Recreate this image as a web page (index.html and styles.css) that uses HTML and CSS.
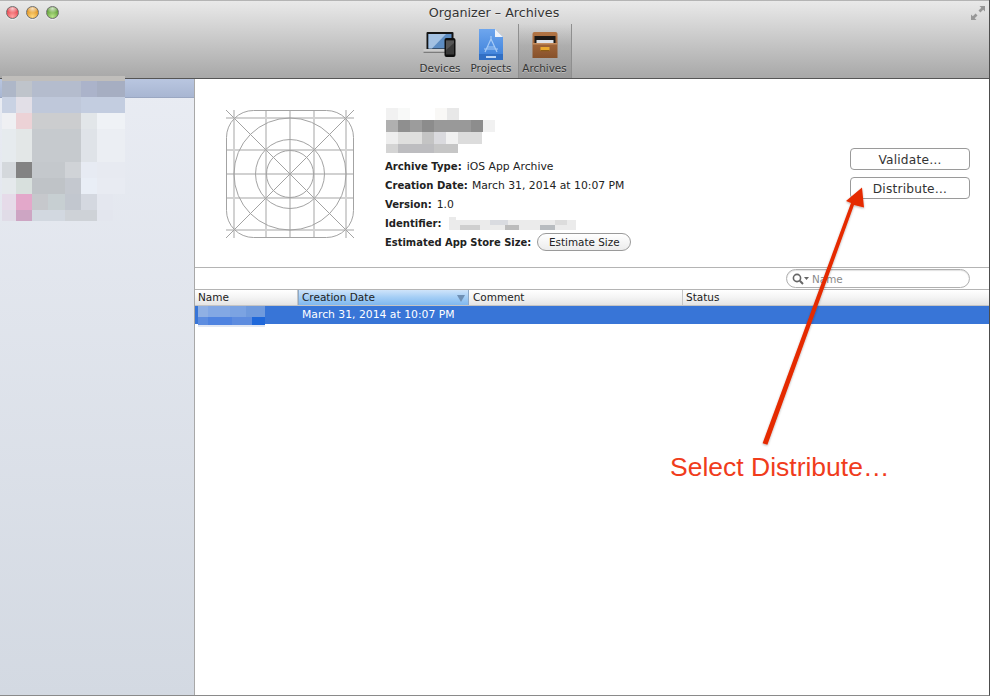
FILE: index.html
```html
<!DOCTYPE html>
<html lang="en">
<head>
<meta charset="utf-8">
<title>Organizer - Archives</title>
<link rel="stylesheet" href="styles.css">
</head>
<body>
<div class="window">
  <header class="titlebar">
    <div class="title-row">
      <div class="lights"><span class="light red"></span><span class="light amber"></span><span class="light green"></span></div>
      <div class="title">Organizer – Archives</div>
      <svg class="fullscreen" width="14" height="14" viewBox="0 0 14 14"><path d="M14 0H8.500L10.300 1.800 7.500 4.600 9.400 6.500 12.200 3.700 14 5.500ZM0 14H5.500L3.700 12.200 6.500 9.400 4.600 7.500 1.800 10.300 0 8.500Z" fill="#979797"/></svg>
    </div>
    <nav class="toolbar">
      <div class="tool">
        <svg width="36" height="32" viewBox="0 0 36 32">
          <path d="M4.500 5Q4.500 4 5.500 4H30.500Q31.500 4 31.500 5V21H4.500Z" fill="#141414"/>
          <path d="M6.500 6H29.500V20.500H6.500Z" fill="#5c8cc2"/>
          <path d="M6.500 6H24L10 20.500H6.500Z" fill="#a3c1e2"/>
          <path d="M1.500 21H24V24Q24 25 23 25H3Q1.500 25 1.500 24Z" fill="#cbcbcb"/>
          <path d="M1.500 23.700H24V25H1.500Z" fill="#7c7c7c"/>
          <rect x="22.500" y="10" width="11" height="19" rx="2" fill="#0e0e0e"/>
          <rect x="24" y="12.500" width="8" height="14" fill="#393939"/>
          <path d="M24 12.500H32V15L24 22Z" fill="#565656"/>
        </svg>
        <span>Devices</span>
      </div>
      <div class="tool">
        <svg width="26" height="32" viewBox="0 0 26 32">
          <defs><linearGradient id="proj" x1="0" y1="0" x2="0" y2="1"><stop offset="0" stop-color="#6ea6ee"/><stop offset="1" stop-color="#3a7ed8"/></linearGradient></defs>
          <path d="M1 1H17L25 9V32H1Z" fill="url(#proj)"/>
          <path d="M17 1L25 9H17Z" fill="#f0f3f8"/>
          <path d="M13 8V11M13 11L7 24M13 11L19 24M9.500 19H16.500M6 21H20" stroke="#a7cbf6" stroke-width="1.200" fill="none"/>
          <path d="M1 26H25V32H1Z" fill="#316fc4"/>
          <rect x="8" y="28" width="10" height="2" fill="#bcd5f4"/>
        </svg>
        <span>Projects</span>
      </div>
      <div class="tool tool-active">
        <svg width="28" height="32" viewBox="0 0 28 32">
          <defs><linearGradient id="cab" x1="0" y1="0" x2="0" y2="1"><stop offset="0" stop-color="#b37545"/><stop offset="1" stop-color="#87512b"/></linearGradient></defs>
          <path d="M3.500 4H24.500Q26.500 4 26.500 6V30H1.500V6Q1.500 4 3.500 4Z" fill="url(#cab)"/>
          <path d="M3.500 8H24.500V15H3.500Z" fill="#1b1816"/>
          <path d="M5.500 12H22.500V15H5.500Z" fill="#dfe3e8"/>
          <path d="M1.500 15H26.500V16.500H1.500Z" fill="#c58d5e"/>
          <rect x="9.500" y="19" width="9" height="4" fill="#eaa92e"/>
          <rect x="9.500" y="22" width="9" height="1.200" fill="#8a5a18"/>
        </svg>
        <span>Archives</span>
      </div>
    </nav>
  </header>

  <div class="body">
    <aside class="sidebar">
      <div class="sidebar-head"></div>
    </aside>

    <main class="main">
      <section class="details">
        <svg class="app-icon" width="130" height="130" viewBox="0 0 130 130">
          <g fill="none" stroke="#d2d2d2" stroke-width="2">
            <path d="M9 1V129M121 1V129M41 1V129M89 1V129M1 9H129M1 41H129M1 89H129M1 121H129"/>
          </g>
          <g fill="none" stroke="#a3a3a3" stroke-width="1">
            <path d="M65 1V129M1 65H129M1 1L129 129M129 1L1 129"/>
            <rect x="1.500" y="1.500" width="127" height="127" rx="27"/>
            <circle cx="65" cy="65" r="56"/>
            <circle cx="65" cy="65" r="34.500"/>
            <circle cx="65" cy="65" r="23.500"/>
          </g>
        </svg>
        <div class="info">
          <div class="info-row"><b>Archive Type:</b><span>iOS App Archive</span></div>
          <div class="info-row"><b>Creation Date:</b><span class="date-value">March 31, 2014 at 10:07 PM</span></div>
          <div class="info-row"><b>Version:</b><span>1.0</span></div>
          <div class="info-row"><b>Identifier:</b></div>
          <div class="info-row"><b class="label-long">Estimated App Store Size:</b><button class="pill-btn">Estimate Size</button></div>
        </div>
        <div class="actions">
          <button class="action-btn">Validate…</button>
          <button class="action-btn">Distribute…</button>
        </div>
      </section>

      <div class="filter-bar">
        <div class="search">
          <svg width="17" height="12" viewBox="0 0 17 12"><circle cx="5" cy="5" r="3.600" fill="none" stroke="#666" stroke-width="1.600"/><path d="M7.800 7.800L11 11" stroke="#666" stroke-width="2"/><path d="M12 4H17L14.500 7Z" fill="#666"/></svg>
          <span>Name</span>
        </div>
      </div>

      <div class="table-head">
        <div class="col col-name">Name</div>
        <div class="col col-date">Creation Date<i class="sort"></i></div>
        <div class="col col-comment">Comment</div>
        <div class="col col-status">Status</div>
      </div>
      <div class="table-row">
        <div class="cell-name"></div>
        <div class="cell-date">March 31, 2014 at 10:07 PM</div>
      </div>
    </main>
  </div>

  <svg class="mosaic" width="990" height="696" viewBox="0 0 990 696">
    <g>
      <rect x="2" y="76" width="123" height="5" fill="#c0bebb"/>
      <rect x="2" y="81" width="14" height="16" fill="#aeb7c8"/><rect x="16" y="81" width="16" height="16" fill="#bfc4cb"/><rect x="32" y="81" width="49" height="16" fill="#b4bccd"/><rect x="81" y="81" width="16" height="16" fill="#abb3ca"/><rect x="97" y="81" width="28" height="16" fill="#a6aec2"/>
      <rect x="2" y="97" width="14" height="16" fill="#c9d2e3"/><rect x="16" y="97" width="16" height="16" fill="#e2dfe7"/><rect x="32" y="97" width="49" height="16" fill="#bfc8da"/><rect x="81" y="97" width="44" height="16" fill="#c3cde0"/>
      <rect x="2" y="113" width="14" height="16" fill="#eff0f3"/><rect x="16" y="113" width="16" height="16" fill="#ecd2d6"/><rect x="32" y="113" width="49" height="16" fill="#cccdcf"/><rect x="81" y="113" width="16" height="16" fill="#e2e6e9"/><rect x="97" y="113" width="28" height="16" fill="#eff2f6"/>
      <rect x="2" y="129" width="14" height="33" fill="#e6ebee"/><rect x="16" y="129" width="16" height="33" fill="#e3e7e7"/><rect x="32" y="129" width="49" height="33" fill="#c6cace"/><rect x="81" y="129" width="16" height="33" fill="#dfe3e8"/><rect x="97" y="129" width="28" height="33" fill="#ebeef3"/>
      <rect x="2" y="162" width="14" height="16" fill="#d4d8dc"/><rect x="16" y="162" width="16" height="16" fill="#838383"/><rect x="32" y="162" width="33" height="16" fill="#c4c8cc"/><rect x="65" y="162" width="16" height="16" fill="#d0d3d7"/><rect x="81" y="162" width="16" height="16" fill="#e7ebf3"/><rect x="97" y="162" width="28" height="16" fill="#e7eaf1"/>
      <rect x="2" y="178" width="14" height="16" fill="#e5e9ec"/><rect x="16" y="178" width="16" height="16" fill="#d8e0dd"/><rect x="32" y="178" width="33" height="16" fill="#bfc3c7"/><rect x="65" y="178" width="16" height="16" fill="#c4c8cf"/><rect x="81" y="178" width="16" height="16" fill="#e9eef6"/><rect x="97" y="178" width="28" height="16" fill="#e8ebf2"/>
      <rect x="2" y="194" width="14" height="16" fill="#e6dbe9"/><rect x="16" y="194" width="16" height="16" fill="#e3a8ca"/><rect x="32" y="194" width="16" height="16" fill="#c6c8cc"/><rect x="48" y="194" width="17" height="16" fill="#c7cfd2"/><rect x="65" y="194" width="16" height="16" fill="#c2c7cf"/><rect x="81" y="194" width="16" height="16" fill="#d4d8e0"/><rect x="97" y="194" width="16" height="16" fill="#e4e7ef"/>
      <rect x="2" y="210" width="14" height="11" fill="#e0dce7"/><rect x="16" y="210" width="16" height="11" fill="#cda5c3"/><rect x="32" y="210" width="33" height="11" fill="#d2d8e0"/><rect x="65" y="210" width="32" height="11" fill="#ced2d7"/><rect x="97" y="210" width="16" height="11" fill="#e3e6ee"/>
    </g>
    <g>
      <rect x="386" y="108" width="12" height="12" fill="#f1f1f1"/><rect x="398" y="108" width="12" height="12" fill="#f8f9f8"/><rect x="435" y="108" width="12" height="12" fill="#f9f8f6"/><rect x="447" y="108" width="12" height="12" fill="#e8e8e8"/>
      <rect x="386" y="120" width="12" height="12" fill="#b0b0b0"/><rect x="398" y="120" width="12" height="12" fill="#8f8f8f"/><rect x="410" y="120" width="12" height="12" fill="#9c9c9c"/><rect x="422" y="120" width="12" height="12" fill="#8c8c8c"/><rect x="434" y="120" width="37" height="12" fill="#999"/><rect x="471" y="120" width="12" height="12" fill="#8d8d8d"/><rect x="483" y="120" width="12" height="12" fill="#f1f1f1"/>
      <rect x="386" y="132" width="12" height="12" fill="#eee"/><rect x="398" y="132" width="24" height="12" fill="#dfdfde"/><rect x="422" y="132" width="12" height="12" fill="#c4c4c4"/><rect x="434" y="132" width="12" height="12" fill="#dadade"/><rect x="446" y="132" width="12" height="12" fill="#f1f1f1"/><rect x="458" y="132" width="24" height="12" fill="#dcdcdc"/>
      <rect x="386" y="144" width="12" height="9" fill="#d4d4d4"/><rect x="398" y="144" width="36" height="9" fill="#bdbdc0"/><rect x="434" y="144" width="24" height="9" fill="#c6c6c6"/>
    </g>
    <g>
      <rect x="449" y="217" width="7" height="8" fill="#eaeaea"/><rect x="449" y="220" width="127" height="10" fill="#ebebeb"/><rect x="460" y="225" width="20" height="5" fill="#cfcfcf"/><rect x="490" y="220" width="18" height="5" fill="#d9dbe0"/><rect x="505" y="225" width="14" height="5" fill="#bcbcbc"/><rect x="540" y="225" width="15" height="5" fill="#b8bcc0"/><rect x="555" y="220" width="12" height="5" fill="#dcdcdc"/>
    </g>
    <g>
      <rect x="198" y="306" width="10" height="11" fill="#8fb0e4"/><rect x="208" y="306" width="22" height="11" fill="#83a8e4"/><rect x="230" y="306" width="16" height="11" fill="#7ba3e2"/><rect x="246" y="306" width="19" height="11" fill="#6f9add"/>
      <rect x="198" y="317" width="10" height="8" fill="#5d8de0"/><rect x="208" y="317" width="24" height="8" fill="#4f83e0"/><rect x="232" y="317" width="20" height="8" fill="#5d8cdf"/><rect x="252" y="317" width="13" height="8" fill="#1f68da"/>
      <rect x="198" y="325" width="67" height="2" fill="#e1e7f3"/>
    </g>
  </svg>

  <svg class="arrow" width="990" height="696" viewBox="0 0 990 696">
    <defs><filter id="sh" x="-30%" y="-10%" width="160%" height="120%"><feDropShadow dx="0" dy="1" stdDeviation="1" flood-color="#000" flood-opacity=".3"/></filter></defs>
    <path d="M762.600 443.200L767.400 444.800 854 205 864 207.500 862 187.500 846 201 851 203Z" fill="#e52b06" filter="url(#sh)"/>
  </svg>
  <div class="callout">Select Distribute…</div>
</div>
</body>
</html>
```

FILE: styles.css
```css
* { box-sizing: border-box; }
html, body { margin: 0; height: 100%; background: #fff; overflow: hidden; }
.window {
  position: relative;
  width: 990px;
  height: 696px;
  display: flex;
  flex-direction: column;
  font-family: "DejaVu Sans", sans-serif;
  font-size: 10.800px;
  color: #222;
  border-right: 1px solid #4d4d4d;
  border-bottom: 1px solid #8a8a8a;
}
.titlebar {
  height: 79px;
  flex: none;
  background: linear-gradient(#e9e9e9, #e4e4e4 8%, #a9a9a9 98%);
  border-top: 1px solid #b4b4b4;
  border-bottom: 1px solid #555;
  display: flex;
  flex-direction: column;
}
.title-row {
  height: 23px;
  flex: none;
  display: grid;
  grid-template-columns: 1fr auto 1fr;
  align-items: center;
  padding: 0 4px 0 6px;
}
.lights { display: flex; gap: 7px; }
.light {
  width: 13px;
  height: 13px;
  border-radius: 50%;
  border: 1px solid #707070;
  box-shadow: 0 1px 0 rgba(255, 255, 255, .6);
}
.red { background: radial-gradient(ellipse 60% 40% at 50% 15%, rgba(255,255,255,.75), transparent), radial-gradient(circle at 50% 85%, #ffa3a3, #e6434c 70%); }
.amber { background: radial-gradient(ellipse 60% 40% at 50% 15%, rgba(255,255,255,.75), transparent), radial-gradient(circle at 50% 85%, #ffd87e, #df911c 70%); }
.green { background: radial-gradient(ellipse 60% 40% at 50% 15%, rgba(255,255,255,.75), transparent), radial-gradient(circle at 50% 85%, #b8e48a, #5c9c33 70%); }
.title {
  font-size: 12.700px;
  color: #333;
  text-shadow: 0 1px 0 rgba(255, 255, 255, .5);
  margin-right: 3px;
}
.fullscreen { justify-self: end; }
.toolbar {
  flex: 1;
  display: flex;
  justify-content: center;
  margin-right: 3px;
}
.tool {
  width: 51px;
  display: flex;
  flex-direction: column;
  align-items: center;
  justify-content: flex-end;
  gap: 1px;
  padding-bottom: 4px;
  font-size: 10.400px;
  color: #333;
  text-shadow: 0 1px 0 rgba(255, 255, 255, .4);
}
.tool svg { margin-bottom: 1px; }
.tool-active {
  width: 54px;
  margin-left: 1px;
  background: linear-gradient(rgba(120,120,120,0), rgba(120,120,120,.28) 40%, rgba(120,120,120,.35));
  border-left: 1px solid #8f8f8f;
  border-right: 1px solid #8f8f8f;
}
.body { flex: 1; display: flex; min-height: 0; }
.sidebar {
  width: 195px;
  flex: none;
  background: linear-gradient(#e9ecf3, #d3d9e2);
  border-right: 1px solid #a8a8a8;
}
.sidebar-head {
  height: 19px;
  background: linear-gradient(#b9c6e0, #a8b6d2);
  border-bottom: 1px solid #9aa7c2;
}
.main { flex: 1; min-width: 0; display: flex; flex-direction: column; background: #fff; }
.details {
  height: 189px;
  flex: none;
  display: flex;
  border-bottom: 1px solid #b4b4b4;
  padding-left: 30px;
}
.app-icon { margin-top: 30px; flex: none; }
.info { margin-left: 30px; flex: none; padding-top: 78px; }
.info-row {
  height: 19px;
  display: flex;
  align-items: center;
  gap: 5px;
  white-space: nowrap;
}
.info-row b { font-weight: 700; font-size: 10.100px; }
.info-row .label-long { font-size: 9.950px; }
.date-value { margin-left: -1px; }
.pill-btn {
  margin: -2px 0 0 1px;
  width: 94px;
  height: 18px;
  padding: 0;
  border: 1px solid #9a9a9a;
  border-radius: 9px;
  background: linear-gradient(#fff, #ececec);
  font-family: inherit;
  font-size: 10.400px;
  color: #222;
}
.actions {
  margin-left: auto;
  margin-right: 19px;
  padding-top: 69px;
  display: flex;
  flex-direction: column;
  gap: 7px;
}
.action-btn {
  width: 120px;
  height: 22px;
  padding: 1px 0 0;
  border: 1px solid #9a9a9a;
  border-radius: 4px;
  background: #fff;
  font-family: inherit;
  font-size: 12.200px;
  color: #333;
  letter-spacing: .2px;
}
.filter-bar {
  height: 22px;
  flex: none;
  display: flex;
  justify-content: flex-end;
  align-items: center;
  padding-right: 19px;
  border-bottom: 1px solid #b4b4b4;
}
.search {
  width: 184px;
  height: 19px;
  border: 1px solid #b0b0b0;
  border-radius: 10px;
  box-shadow: inset 0 1px 1px rgba(0, 0, 0, .12);
  display: flex;
  align-items: center;
  gap: 3px;
  padding-left: 5px;
  font-size: 10.400px;
  color: #8a8a8a;
}
.table-head {
  height: 16px;
  flex: none;
  display: flex;
  font-size: 10.500px;
  background: linear-gradient(#fff, #f4f4f4 50%, #e4e4e4);
  border-bottom: 1px solid #c4c4c4;
}
.col {
  position: relative;
  display: flex;
  align-items: center;
  padding: 0 0 1px 3px;
  border-right: 1px solid #c6c6c6;
  white-space: nowrap;
}
.col-name { width: 103px; }
.col-date {
  width: 171px;
  background: linear-gradient(#cfe4fa, #a3cdf5 50%, #80b8ef);
  border-right-color: #8da9c8;
  border-left: 1px solid #8da9c8;
}
.col-comment { width: 214px; padding-left: 4px; }
.col-status { flex: 1; border-right: 0; }
.sort {
  position: absolute;
  right: 3px;
  top: 5px;
  border-left: 4.500px solid transparent;
  border-right: 4.500px solid transparent;
  border-top: 7px solid #6f90b5;
}
.table-row {
  height: 18px;
  flex: none;
  display: flex;
  align-items: center;
  padding-bottom: 1px;
  background: #3875d7;
  color: #fff;
}
.cell-name { width: 103px; flex: none; }
.cell-date { padding-left: 4px; white-space: nowrap; }
.mosaic, .arrow { position: absolute; left: 0; top: 0; pointer-events: none; }
.callout {
  position: absolute;
  left: 670px;
  top: 452px;
  font-family: "Liberation Sans", Arial, sans-serif;
  font-size: 26.500px;
  line-height: 30px;
  color: #f03c1c;
  white-space: nowrap;
}
```
